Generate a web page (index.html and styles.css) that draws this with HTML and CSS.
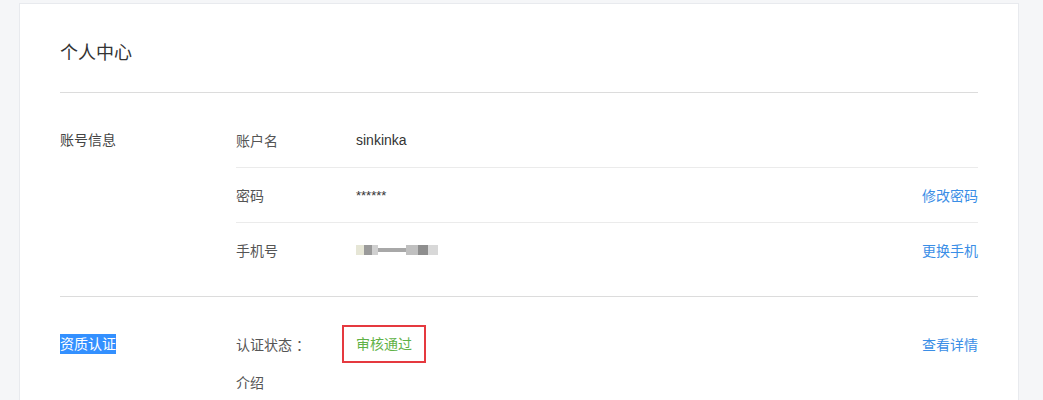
FILE: index.html
```html
<!DOCTYPE html>
<html>
<head>
    <title>个人中心</title>
    <link rel="stylesheet" href="styles.css">
</head>
<body>
    <div class="card">
        <div class="card-header">个人中心</div>

        <div class="section">
            <div class="section-label">账号信息</div>
            <div class="section-body">
                <div class="row">
                    <div class="row-label">账户名</div>
                    <div class="row-value">sinkinka</div>
                </div>
                <div class="row">
                    <div class="row-label">密码</div>
                    <div class="row-value stars">******</div>
                    <a class="row-action" href="#">修改密码</a>
                </div>
                <div class="row last">
                    <div class="row-label">手机号</div>
                    <div class="row-value">
                        <span class="masked">
                            <i class="px a"></i><i class="px b"></i><i class="px c"></i><i class="px d"></i><i class="px e"></i><i class="px f"></i><i class="px g"></i>
                        </span>
                    </div>
                    <a class="row-action" href="#">更换手机</a>
                </div>
            </div>
        </div>

        <div class="section no-border">
            <div class="section-label"><span class="selected">资质认证</span></div>
            <div class="section-body">
                <div class="row last">
                    <div class="row-label">认证状态 ：</div>
                    <div class="row-value"><span class="status-box">审核通过</span></div>
                    <a class="row-action" href="#">查看详情</a>
                </div>
                <div class="row-intro">
                    <div class="row-label">介绍</div>
                </div>
            </div>
        </div>
    </div>
</body>
</html>
```

FILE: styles.css
```css
body {
    margin: 0;
    padding: 3px 0 0 19px;
    background-color: #f5f6f8;
    font-family: "Liberation Sans", "Noto Sans CJK SC", sans-serif;
    font-size: 14px;
    color: #555;
    overflow: hidden;
}
.card {
    width: 918px;
    height: 396px;
    padding: 0 40px;
    background-color: #fff;
    border: 1px solid #e8eaee;
    border-bottom: none;
    overflow: hidden;
}
.card-header {
    padding-top: 10px;
    height: 78px;
    line-height: 78px;
    font-size: 18px;
    color: #333;
    border-bottom: 1px solid #dcdcdc;
}
.section {
    display: flex;
    padding: 20px 0 19px;
    border-bottom: 1px solid #dcdcdc;
}
.section.no-border {
    border-bottom: none;
}
.section-label {
    width: 176px;
    line-height: 54px;
    color: #444;
}
.selected {
    background-color: #3390ff;
    color: #fff;
    padding: 2px 0;
}
.section-body {
    flex: 1;
}
.row {
    display: flex;
    align-items: center;
    height: 54px;
    border-bottom: 1px solid #ebebeb;
}
.row.last {
    border-bottom: none;
}
.row-label {
    width: 120px;
    color: #555;
}
.row-value {
    flex: 1;
    color: #333;
}
.stars {
    font-size: 13px;
}
.row-action {
    color: #3a8ee6;
    text-decoration: none;
}
.row-intro {
    line-height: 24px;
}
.status-box {
    display: inline-block;
    margin-left: -14px;
    padding: 8px 12px;
    line-height: 18px;
    border: 2px solid #e5393f;
    color: #5fb246;
}
.masked {
    display: inline-flex;
    align-items: center;
    height: 12px;
    filter: blur(0.7px);
}
.px {
    display: inline-block;
    height: 10px;
}
.px.a { width: 8px; background: #e6e6d6; }
.px.b { width: 8px; background: #9a9a9a; }
.px.c { width: 6px; background: #d0d0d0; }
.px.d { width: 28px; height: 4px; background: #a8a8a8; }
.px.e { width: 12px; background: #c0c0c0; }
.px.f { width: 10px; background: #8e8e8e; }
.px.g { width: 10px; background: #d8d8d8; }
```
